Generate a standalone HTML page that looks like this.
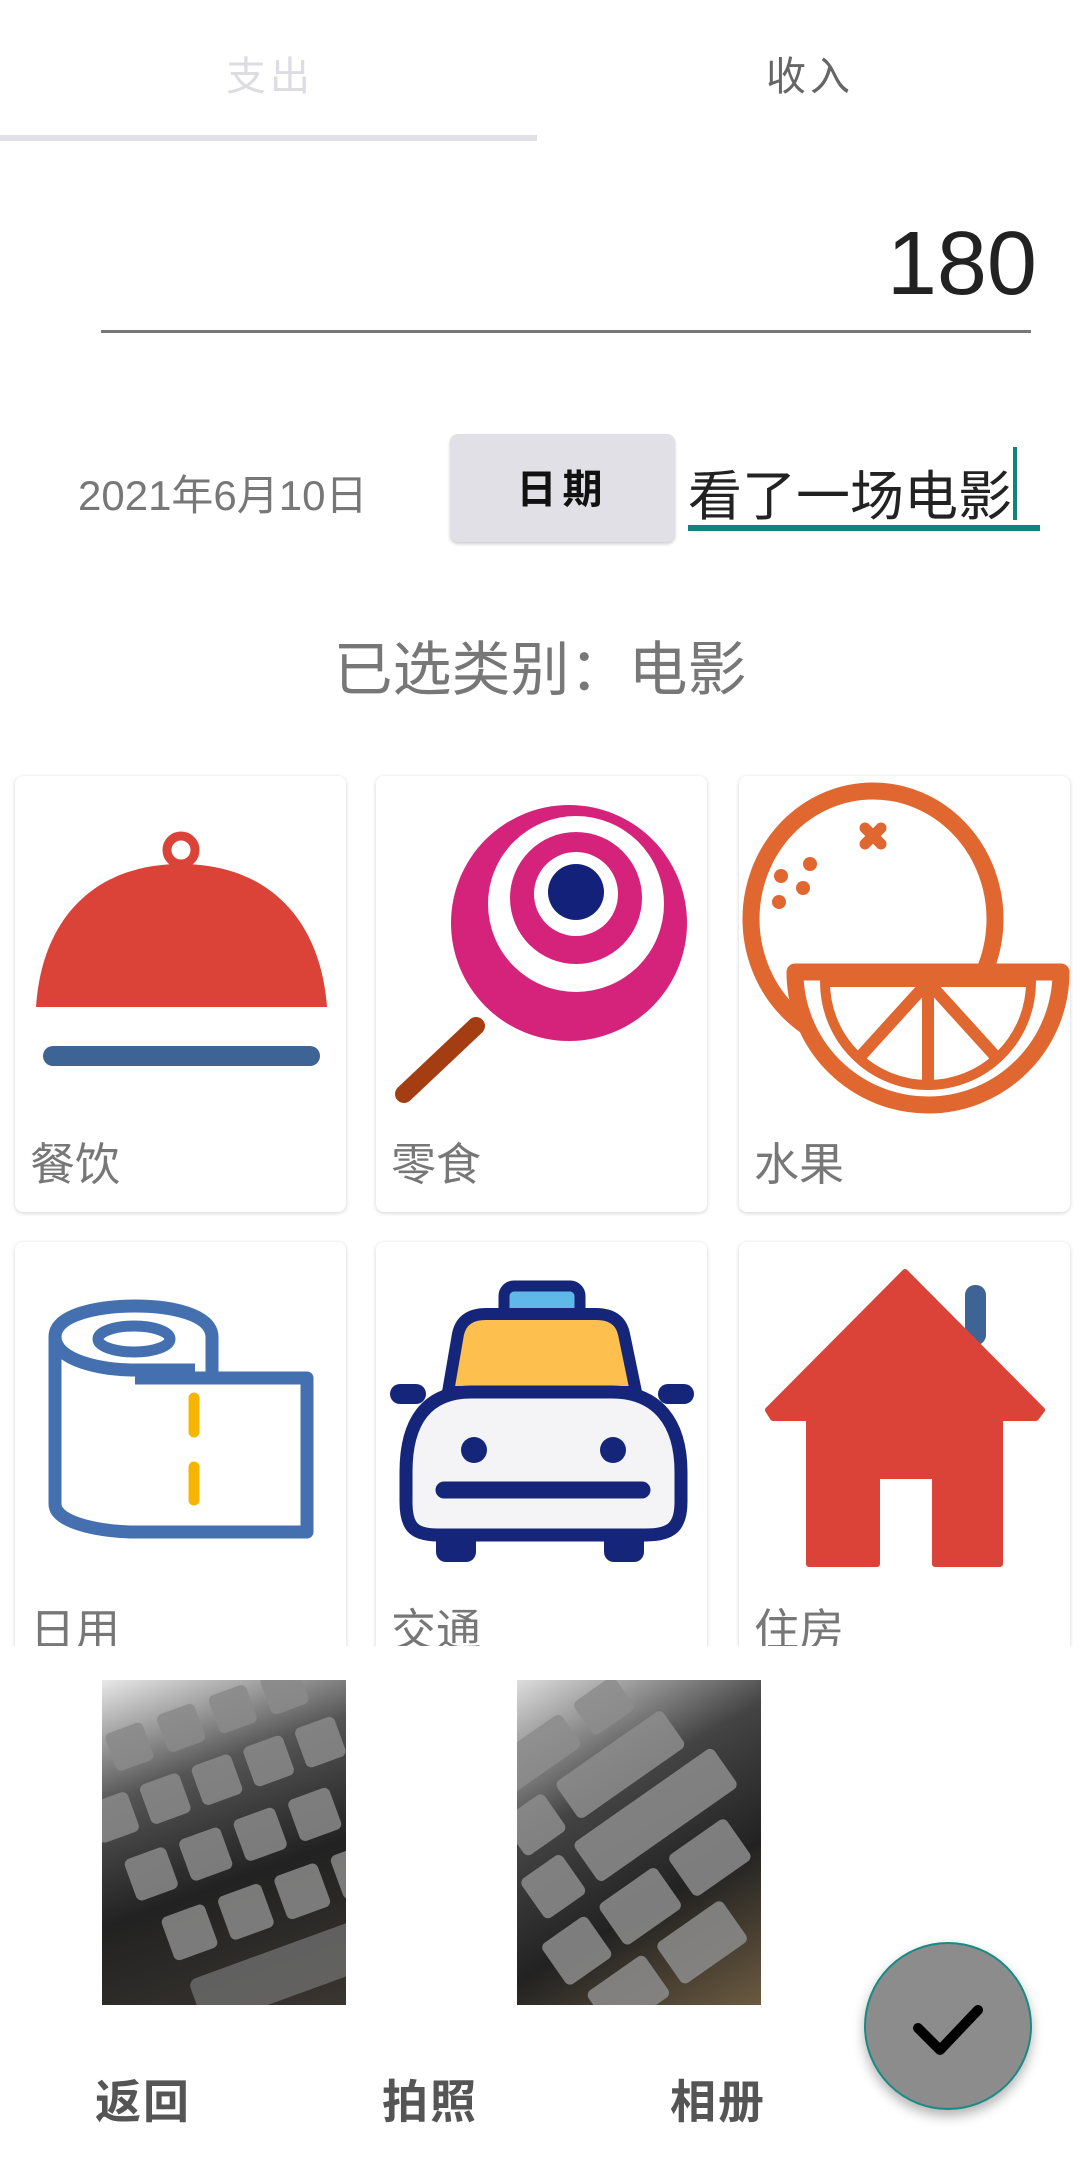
<!DOCTYPE html>
<html><head><meta charset="utf-8"><style>
*{margin:0;padding:0;box-sizing:border-box}
body{width:1080px;height:2157px;background:#fff;position:relative;overflow:hidden;font-family:"Liberation Sans","Noto Sans CJK SC",sans-serif}
.a{position:absolute}
.tab{top:44px;font-size:40px;width:540px;text-align:center;letter-spacing:4px}
.card{position:absolute;width:331px;height:436px;background:#fff;border-radius:8px;box-shadow:0 1px 4px rgba(0,0,0,.18)}
.card svg{position:absolute;left:0;top:0}
.lbl{position:absolute;left:15px;top:352px;font-size:45px;color:#777}
.btn{font-size:46px;font-weight:bold;color:#555;top:2066px;width:140px;text-align:center;letter-spacing:2px}
.photo{position:absolute;top:1680px;width:244px;height:325px;overflow:hidden;background:linear-gradient(160deg,#e8e8e8 0%,#555 30%,#222 60%,#3a3530 100%)}
</style></head><body>
<div class="a tab" style="left:0;color:#dcdce2">支出</div>
<div class="a tab" style="left:540px;color:#666">收入</div>
<div class="a" style="left:0;top:135px;width:537px;height:6px;background:#e0e0e6"></div>
<div class="a" style="right:43px;top:214px;font-size:90px;color:#222;line-height:100px">180</div>
<div class="a" style="left:101px;top:330px;width:930px;height:3px;background:#777"></div>
<div class="a" style="left:78px;top:462px;font-size:42px;color:#777">2021年6月10日</div>
<div class="a" style="left:450px;top:434px;width:225px;height:108px;background:#e0e0e6;border-radius:8px;box-shadow:0 2px 3px rgba(0,0,0,.2);font-size:40px;text-align:center;line-height:112px;color:#111;letter-spacing:6px;font-weight:bold">日期</div>
<div class="a" style="left:688px;top:452px;font-size:54px;color:#222">看了一场电影</div>
<div class="a" style="left:1013px;top:447px;width:4px;height:73px;background:#10837d"></div>
<div class="a" style="left:688px;top:525px;width:352px;height:6px;background:#10837d"></div>
<div class="a" style="left:0;width:1080px;text-align:center;top:622px;font-size:59px;color:#777">已选类别：电影</div>

<div class="a" style="left:0;top:760px;width:1080px;height:886px;overflow:hidden">
<div style="position:relative;top:-760px">
<div class="card" style="left:15px;top:776px"><svg width="331" height="436">
<circle cx="166" cy="74" r="14" fill="none" stroke="#db4338" stroke-width="9"/>
<path d="M21,231 L312,231 C305,140 250,88 166,88 C82,88 27,140 21,231 Z" fill="#db4338"/>
<rect x="28" y="270" width="277" height="20" rx="10" fill="#3d6494"/>
</svg><div class="lbl">餐饮</div></div>
<div class="card" style="left:376px;top:776px"><svg width="331" height="436">
<line x1="100" y1="250" x2="28" y2="318" stroke="#a53d12" stroke-width="18" stroke-linecap="round"/>
<circle cx="193" cy="147" r="118" fill="#d5237c"/>
<circle cx="200" cy="128" r="88" fill="#fff"/>
<circle cx="200" cy="122" r="66" fill="#d5237c"/>
<circle cx="200" cy="118" r="42" fill="#fff"/>
<circle cx="200" cy="116" r="28" fill="#14217a"/>
</svg><div class="lbl">零食</div></div>
<div class="card" style="left:739px;top:776px;overflow:hidden"><svg width="331" height="436">
<ellipse cx="134" cy="143" rx="122" ry="128" fill="none" stroke="#e0672f" stroke-width="17"/>
<path d="M126,52 l16,16 M142,52 l-16,16" stroke="#e0672f" stroke-width="11" stroke-linecap="round"/>
<circle cx="71" cy="88" r="7" fill="#e0672f"/><circle cx="42" cy="100" r="7" fill="#e0672f"/><circle cx="64" cy="112" r="7" fill="#e0672f"/><circle cx="40" cy="126" r="7" fill="#e0672f"/>
<path d="M56,196 L322,196 A133,133 0 0 1 56,196 Z" fill="#fff" stroke="#e0672f" stroke-width="17" stroke-linejoin="round"/>
<path d="M86,206 L292,206 A103,103 0 0 1 86,206 Z" fill="none" stroke="#e0672f" stroke-width="10"/>
<path d="M189,206 V305 M189,206 L120,282 M189,206 L258,282" stroke="#e0672f" stroke-width="12"/>
</svg><div class="lbl">水果</div></div>

<div class="card" style="left:15px;top:1242px"><svg width="331" height="436">
<path d="M40,95 V262 C40,282 90,290 119,290 H292 V136 H120" fill="none" stroke="#4470b0" stroke-width="13" stroke-linejoin="round"/>
<path d="M40,95 C40,72 85,64 120,64 C155,64 197,72 197,95 V136" fill="none" stroke="#4470b0" stroke-width="13"/>
<path d="M40,95 C40,118 85,128 120,128 H180" fill="none" stroke="#4470b0" stroke-width="13"/>
<ellipse cx="119" cy="97" rx="36" ry="13" fill="none" stroke="#4470b0" stroke-width="11"/>
<path d="M179,156 V190 M179,225 V258" stroke="#f7b500" stroke-width="11" stroke-linecap="round"/>
</svg><div class="lbl">日用</div></div>
<div class="card" style="left:376px;top:1242px"><svg width="331" height="436">
<rect x="128" y="44" width="76" height="46" rx="10" fill="#5fb8e8" stroke="#15267a" stroke-width="11"/>
<path d="M72,150 L82,92 C85,78 95,72 110,72 H220 C235,72 245,78 248,92 L260,150 Z" fill="#fdc04f" stroke="#15267a" stroke-width="12" stroke-linejoin="round"/>
<rect x="14" y="142" width="36" height="20" rx="10" fill="#15267a"/><rect x="282" y="142" width="36" height="20" rx="10" fill="#15267a"/>
<rect x="60" y="280" width="40" height="40" rx="10" fill="#15267a"/><rect x="228" y="280" width="40" height="40" rx="10" fill="#15267a"/>
<path d="M30,230 C30,180 50,150 95,150 H236 C281,150 305,180 305,230 V260 C305,285 295,293 270,293 H62 C38,293 30,285 30,260 Z" fill="#f4f4f6" stroke="#15267a" stroke-width="13"/>
<circle cx="98" cy="208" r="13" fill="#15267a"/><circle cx="237" cy="208" r="13" fill="#15267a"/>
<line x1="68" y1="248" x2="266" y2="248" stroke="#15267a" stroke-width="17" stroke-linecap="round"/>
</svg><div class="lbl">交通</div></div>
<div class="card" style="left:739px;top:1242px"><svg width="331" height="436">
<rect x="226" y="43" width="21" height="60" rx="10" fill="#3d6494"/>
<path d="M166,30 L303,168 L297,176 H261 V322 H196 V234 H138 V322 H70 V176 H34 L29,168 Z" fill="#db4338" stroke="#db4338" stroke-width="6" stroke-linejoin="round"/>
</svg><div class="lbl">住房</div></div>
</div></div>

<div class="photo" style="left:102px"><svg width="244" height="325">
<g fill="#8a8a8a" opacity=".85" transform="rotate(-20 122 160)">
<rect x="-10" y="20" width="40" height="40" rx="6"/><rect x="45" y="20" width="40" height="40" rx="6"/><rect x="100" y="20" width="40" height="40" rx="6"/><rect x="155" y="20" width="40" height="40" rx="6"/><rect x="210" y="20" width="40" height="40" rx="6"/>
<rect x="5" y="80" width="42" height="42" rx="6"/><rect x="60" y="80" width="42" height="42" rx="6"/><rect x="115" y="80" width="42" height="42" rx="6"/><rect x="170" y="80" width="42" height="42" rx="6"/><rect x="225" y="80" width="42" height="42" rx="6"/>
<rect x="20" y="145" width="44" height="44" rx="6"/><rect x="78" y="145" width="44" height="44" rx="6"/><rect x="136" y="145" width="44" height="44" rx="6"/><rect x="194" y="145" width="44" height="44" rx="6"/>
<rect x="35" y="212" width="46" height="46" rx="6"/><rect x="95" y="212" width="46" height="46" rx="6"/><rect x="155" y="212" width="46" height="46" rx="6"/><rect x="215" y="212" width="46" height="46" rx="6"/>
<rect x="40" y="280" width="260" height="50" rx="8" fill="#6a6a6a"/>
</g></svg></div>
<div class="photo" style="left:517px;background:linear-gradient(150deg,#ddd 0%,#444 35%,#222 65%,#6b5a40 100%)"><svg width="244" height="325">
<g fill="#8d8d8d" opacity=".85" transform="rotate(-35 122 160)">
<rect x="40" y="10" width="90" height="40" rx="6"/><rect x="145" y="10" width="50" height="40" rx="6"/>
<rect x="20" y="65" width="50" height="45" rx="6"/><rect x="85" y="65" width="130" height="45" rx="6"/>
<rect x="0" y="125" width="50" height="48" rx="6"/><rect x="65" y="125" width="170" height="48" rx="6"/>
<rect x="-20" y="190" width="55" height="50" rx="6"/><rect x="50" y="190" width="70" height="50" rx="6"/><rect x="135" y="190" width="70" height="50" rx="6"/>
<rect x="-10" y="255" width="70" height="50" rx="6"/><rect x="75" y="255" width="80" height="50" rx="6"/>
</g></svg></div>

<div class="a btn" style="left:73px">返回</div>
<div class="a btn" style="left:360px">拍照</div>
<div class="a btn" style="left:648px">相册</div>
<div class="a" style="left:864px;top:1942px;width:168px;height:168px;border-radius:50%;background:#8c8c8c;border:2px solid #1a8a85;box-shadow:0 6px 12px rgba(0,0,0,.3)">
<svg width="164" height="164" style="position:absolute;left:0;top:0"><path d="M52,84 L74,106 L112,66" fill="none" stroke="#000" stroke-width="10" stroke-linecap="round" stroke-linejoin="round"/></svg></div>
</body></html>
